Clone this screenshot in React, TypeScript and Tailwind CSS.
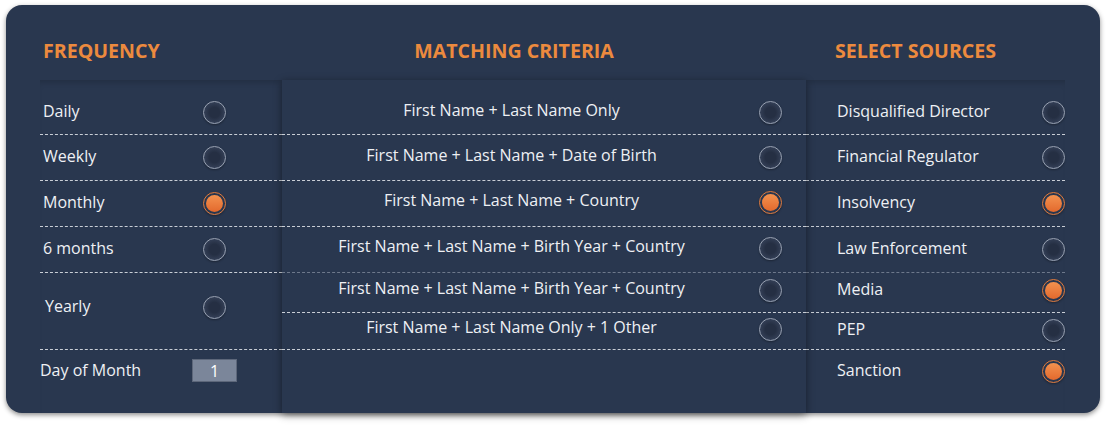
const frequency = [
  { label: 'Daily', h: 'h-[44px]', checked: false },
  { label: 'Weekly', h: 'h-[45px]', checked: false },
  { label: 'Monthly', h: 'h-[45px]', checked: true },
  { label: '6 months', h: 'h-[45px]', checked: false },
  { label: 'Yearly', h: 'h-[76px] pb-[8px]', checked: false, pad: 'pl-[5px]' },
];

const criteria = [
  { label: 'First Name + Last Name Only', h: 'h-[44px]', checked: false },
  { label: 'First Name + Last Name + Date of Birth', h: 'h-[45px]', checked: false },
  { label: 'First Name + Last Name + Country', h: 'h-[45px] pb-[2px]', checked: true },
  { label: 'First Name + Last Name + Birth Year + Country', h: 'h-[45px] pb-[2px]', checked: false },
  { label: 'First Name + Last Name + Birth Year + Country', h: 'h-[39px] pb-[4px]', checked: false, faint: true },
  { label: 'First Name + Last Name Only + 1 Other', h: 'h-[36px] pb-[4px]', checked: false },
];

const sources = [
  { label: 'Disqualified Director', h: 'h-[44px]', checked: false },
  { label: 'Financial Regulator', h: 'h-[45px]', checked: false },
  { label: 'Insolvency', h: 'h-[45px]', checked: true },
  { label: 'Law Enforcement', h: 'h-[45px]', checked: false },
  { label: 'Media', h: 'h-[39px] pb-[4px]', checked: true, faint: true },
  { label: 'PEP', h: 'h-[36px] pb-[2px]', checked: false },
];

const Radio = ({ checked }: { checked: boolean }) =>
  checked ? (
    <div className="w-[23px] h-[23px] shrink-0 rounded-full border border-[#e07a3c] flex items-center justify-center shadow-[0_1px_2px_rgba(0,0,0,0.3)]">
      <div className="w-[17px] h-[17px] rounded-full bg-[linear-gradient(180deg,#f3924f,#e3692d)]" />
    </div>
  ) : (
    <div className="w-[23px] h-[23px] shrink-0 rounded-full border border-[#98a1b1] bg-[radial-gradient(circle,#252f43_35%,#404d67_100%)] shadow-[0_1px_2px_rgba(0,0,0,0.3)]" />
  );

const Divider = ({ faint }: { faint?: boolean }) => (
  <div className={`border-b border-dashed ${faint ? 'border-[#6d788b]' : 'border-[#c9ced6]'}`} />
);

export default function App() {
  return (
    <div className="w-[1107px] h-[425px] bg-white pt-[5px] pl-[6px]" style={{ fontFamily: '"Open Sans", sans-serif' }}>
      <div className="w-[1094px] h-[408px] rounded-[16px] bg-[#29374f] shadow-[0_2px_5px_rgba(0,0,0,0.45)] flex flex-col pl-[34px] text-[16px] text-[#eef0f4]">
        {/* headers */}
        <div className="h-[75px] flex items-center text-[19.6px] font-bold text-[#ec8a3e] pt-[16px]">
          <div className="w-[242px] pl-[3px]">FREQUENCY</div>
          <div className="w-[524px] pr-[60px] text-center">MATCHING CRITERIA</div>
          <div className="w-[259px] pl-[29px]">SELECT SOURCES</div>
        </div>

        {/* body */}
        <div className="flex flex-1 shadow-[inset_0_6px_6px_-4px_rgba(0,0,0,0.18)] w-[1025px]">
          <div className="w-[242px] pt-[10px] flex flex-col">
            {frequency.map((r, i) => (
              <div key={i}>
                <div className={`${r.h} flex items-center ${r.pad ?? 'pl-[3px]'}`}>
                  <span className={`${r.pad ? 'w-[158px]' : 'w-[160px]'} pb-[3px]`}>{r.label}</span>
                  <Radio checked={r.checked} />
                </div>
                <Divider />
              </div>
            ))}
            <div className="h-[41px] flex items-center">
              <span className="w-[152px] pb-[2px]">Day of Month</span>
              <div className="w-[45px] h-[23px] bg-[#7b869a] border border-[#5d677a] flex items-center justify-center text-white text-[16px] leading-none">
                1
              </div>
            </div>
          </div>

          <div className="w-[524px] pt-[10px] flex flex-col bg-[#29374f] shadow-[0_2px_8px_rgba(0,0,0,0.45)] relative">
            {criteria.map((r, i) => (
              <div key={i}>
                <div className={`${r.h} flex items-center`}>
                  <span className="w-[459px] text-center pb-[5px]">{r.label}</span>
                  <div className="pl-[18px]">
                    <Radio checked={r.checked} />
                  </div>
                </div>
                <Divider faint={criteria[i + 1]?.faint} />
              </div>
            ))}
          </div>

          <div className="w-[259px] pt-[10px] flex flex-col">
            {sources.map((r, i) => (
              <div key={i}>
                <div className={`${r.h} flex items-center pl-[31px]`}>
                  <span className="w-[205px] pb-[3px]">{r.label}</span>
                  <Radio checked={r.checked} />
                </div>
                <Divider faint={sources[i + 1]?.faint} />
              </div>
            ))}
            <div className="h-[42px] flex items-center pl-[31px]">
              <span className="w-[205px] pb-[3px]">Sanction</span>
              <Radio checked />
            </div>
          </div>
        </div>
      </div>
    </div>
  );
}
